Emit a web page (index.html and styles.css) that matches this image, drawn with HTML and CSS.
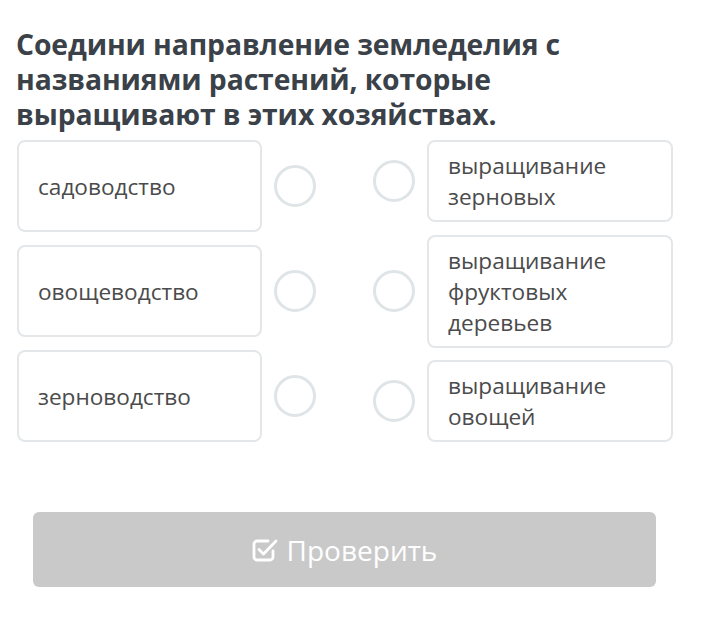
FILE: index.html
```html
<!DOCTYPE html>
<html lang="ru">
<head>
<meta charset="utf-8">
<link rel="stylesheet" href="styles.css">
</head>
<body>
<main class="task">
  <h1 class="title">Соедини направление земледелия с названиями растений, которые выращивают в этих хозяйствах.</h1>
  <div class="match">
    <div class="col col-left">
      <div class="item"><div class="card card-left">садоводство</div><span class="dot"></span></div>
      <div class="item"><div class="card card-left">овощеводство</div><span class="dot"></span></div>
      <div class="item"><div class="card card-left">зерноводство</div><span class="dot"></span></div>
    </div>
    <div class="col col-right">
      <div class="item"><span class="dot"></span><div class="card card-right">выращивание зерновых</div></div>
      <div class="item"><span class="dot"></span><div class="card card-right">выращивание фруктовых деревьев</div></div>
      <div class="item"><span class="dot"></span><div class="card card-right">выращивание овощей</div></div>
    </div>
  </div>
  <button class="check" type="button">
    <svg class="check-icon" width="26" height="26" viewBox="0 0 26 26" fill="none" stroke="#fff" stroke-width="2.8" stroke-linecap="round" stroke-linejoin="round">
      <path d="M21 14v6a3 3 0 0 1-3 3H5a3 3 0 0 1-3-3V7a3 3 0 0 1 3-3h11"/>
      <path d="M7 12.5l4.5 4.5L24 4"/>
    </svg>
    <span>Проверить</span>
  </button>
</main>
</body>
</html>
```
FILE: styles.css
```css
html, body {
  margin: 0;
  padding: 0;
  background: #ffffff;
}
body {
  font-family: "Open Sans", "Noto Sans", sans-serif;
}
.task {
  padding: 27px 0 0 16px;
  width: 660px;
}
.title {
  margin: 0 0 8px 0;
  font-size: 28.3px;
  line-height: 35px;
  font-weight: 700;
  color: #3a4148;
  width: 600px;
  letter-spacing: -0.1px;
}
.match {
  display: flex;
  width: 657px;
  margin-left: 1px;
}
.col {
  display: flex;
  flex-direction: column;
}
.col-left {
  gap: 13px;
  width: 299px;
}
.col-right {
  justify-content: space-between;
  margin-left: 57px;
}
.item {
  display: flex;
  align-items: center;
}
.card {
  box-sizing: border-box;
  width: 246px;
  border: 2px solid #e4e7e9;
  border-radius: 8px;
  background: #fff;
  color: #4b4b4b;
  font-size: 22.6px;
  line-height: 31px;
}
.card-left {
  height: 92px;
  display: flex;
  align-items: center;
  padding: 0 10px 0 19px;
}
.card-right {
  padding: 8px 10px 8px 19px;
}
.dot {
  box-sizing: border-box;
  width: 42px;
  height: 42px;
  border: 3px solid #dfe4e7;
  border-radius: 50%;
  flex: none;
}
.card-left + .dot {
  margin-left: 12px;
}
.col-right .dot {
  margin-right: 12px;
}
.check {
  display: flex;
  align-items: center;
  justify-content: center;
  gap: 9px;
  margin: 70px 0 0 17px;
  width: 623px;
  height: 75px;
  border: none;
  border-radius: 6px;
  background: #c9c9c9;
  color: #ffffff;
  font-family: "Open Sans", "Noto Sans", sans-serif;
  font-size: 28px;
  padding: 0;
}
.check-icon {
  flex: none;
  width: 26px;
  height: 26px;
}
```
